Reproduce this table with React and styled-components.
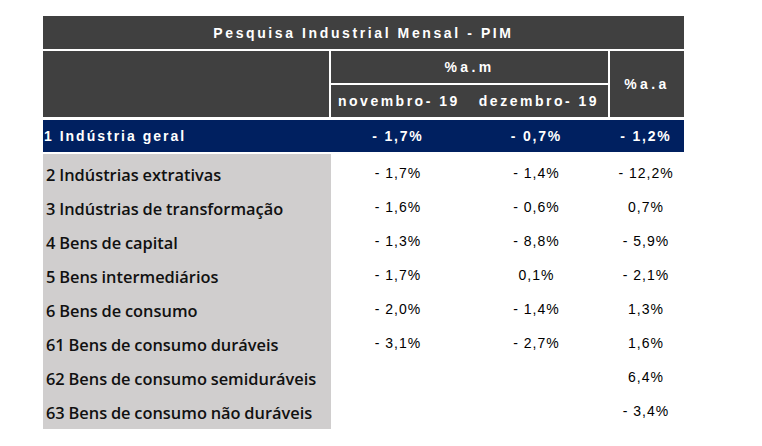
import React from 'react'
import styled, { createGlobalStyle } from 'styled-components';

const GlobalStyle = createGlobalStyle`
  body {
    margin: 0;
    background: #ffffff;
  }
`

const rows = [
  { label: '2 Indústrias extrativas', nov: '- 1,7%', dez: '- 1,4%', aa: '- 12,2%' },
  { label: '3 Indústrias de transformação', nov: '- 1,6%', dez: '- 0,6%', aa: '0,7%' },
  { label: '4 Bens de capital', nov: '- 1,3%', dez: '- 8,8%', aa: '- 5,9%' },
  { label: '5 Bens intermediários', nov: '- 1,7%', dez: '0,1%', aa: '- 2,1%' },
  { label: '6 Bens de consumo', nov: '- 2,0%', dez: '- 1,4%', aa: '1,3%' },
  { label: '61 Bens de consumo duráveis', nov: '- 3,1%', dez: '- 2,7%', aa: '1,6%' },
  { label: '62 Bens de consumo semiduráveis', nov: '', dez: '', aa: '6,4%' },
  { label: '63 Bens de consumo não duráveis', nov: '', dez: '', aa: '- 3,4%' },
]

function App() {
  return (
    <>
      <GlobalStyle />
      <Page>
        <Table>
          <TitleBar>Pesquisa Industrial Mensal - PIM</TitleBar>

          <HeaderGrid>
            <HeadCell $rows="1 / 3" />
            <HeadCell $spacing="3.4px">%a.m</HeadCell>
            <HeadCell $rows="1 / 3" $spacing="3.4px">%a.a</HeadCell>
            <SubHead>
              <span>novembro- 19</span>
              <span>dezembro- 19</span>
            </SubHead>
          </HeaderGrid>

          <TotalRow>
            <TotalLabel>1 Indústria geral</TotalLabel>
            <TotalValue>- 1,7%</TotalValue>
            <TotalValue>- 0,7%</TotalValue>
            <TotalValue>- 1,2%</TotalValue>
          </TotalRow>

          <Body>
            {rows.map((r) => (
              <Row key={r.label}>
                <Label>{r.label}</Label>
                <Value>{r.nov}</Value>
                <Value>{r.dez}</Value>
                <Value>{r.aa}</Value>
              </Row>
            ))}
          </Body>
        </Table>
      </Page>
    </>
  )
}

export default App

const Page = styled.div`
  padding: 16px 0 0 43px;
`

const Table = styled.div`
  width: 641px;
  font-family: "Liberation Sans", Arial, sans-serif;
`

const TitleBar = styled.div`
  height: 33px;
  background: #404040;
  color: #ffffff;
  font-weight: bold;
  font-size: 14px;
  letter-spacing: 2.6px;
  display: flex;
  align-items: center;
  justify-content: center;
`

const HeaderGrid = styled.div`
  margin-top: 2px;
  display: grid;
  grid-template-columns: 286px 277px 74px;
  grid-template-rows: 32px 32px;
  gap: 2px 2px;
`

const HeadCell = styled.div`
  background: #404040;
  color: #ffffff;
  font-weight: bold;
  font-size: 14px;
  letter-spacing: ${(p) => p.$spacing || '2px'};
  grid-row: ${(p) => p.$rows || 'auto'};
  display: flex;
  align-items: center;
  justify-content: center;
`

const SubHead = styled.div`
  grid-column: 2;
  grid-row: 2;
  background: #404040;
  color: #ffffff;
  font-weight: bold;
  font-size: 14px;
  letter-spacing: 2.5px;
  display: flex;
  align-items: center;
  padding-left: 7px;
  gap: 19px;
`

const TotalRow = styled.div`
  margin-top: 3px;
  height: 32px;
  background: #002060;
  color: #ffffff;
  font-weight: bold;
  font-size: 14px;
  display: grid;
  grid-template-columns: 288px 134px 143px 76px;
  align-items: center;
`

const TotalLabel = styled.div`
  padding-left: 1px;
  letter-spacing: 2px;
`

const TotalValue = styled.div`
  text-align: center;
  letter-spacing: 1.8px;
`

const Body = styled.div`
  margin-top: 2px;
  display: grid;
  grid-template-columns: 288px 134px 143px 76px;
  background: linear-gradient(to right, #d0cece 288px, transparent 288px);
  padding: 3px 0 0;
  width: 641px;
  box-sizing: border-box;
`

const Row = styled.div`
  display: contents;
`

const Label = styled.div`
  height: 34px;
  color: #111111;
  font-family: "Open Sans", "Noto Sans", sans-serif;
  font-weight: 600;
  font-size: 16.4px;
  word-spacing: -0.5px;
  padding: 0 0 0 3px;
  display: flex;
  align-items: center;
`

const Value = styled.div`
  height: 34px;
  color: #000000;
  font-size: 14px;
  letter-spacing: 1px;
  display: flex;
  align-items: center;
  justify-content: center;
  padding-bottom: 3px;
  box-sizing: border-box;
`
